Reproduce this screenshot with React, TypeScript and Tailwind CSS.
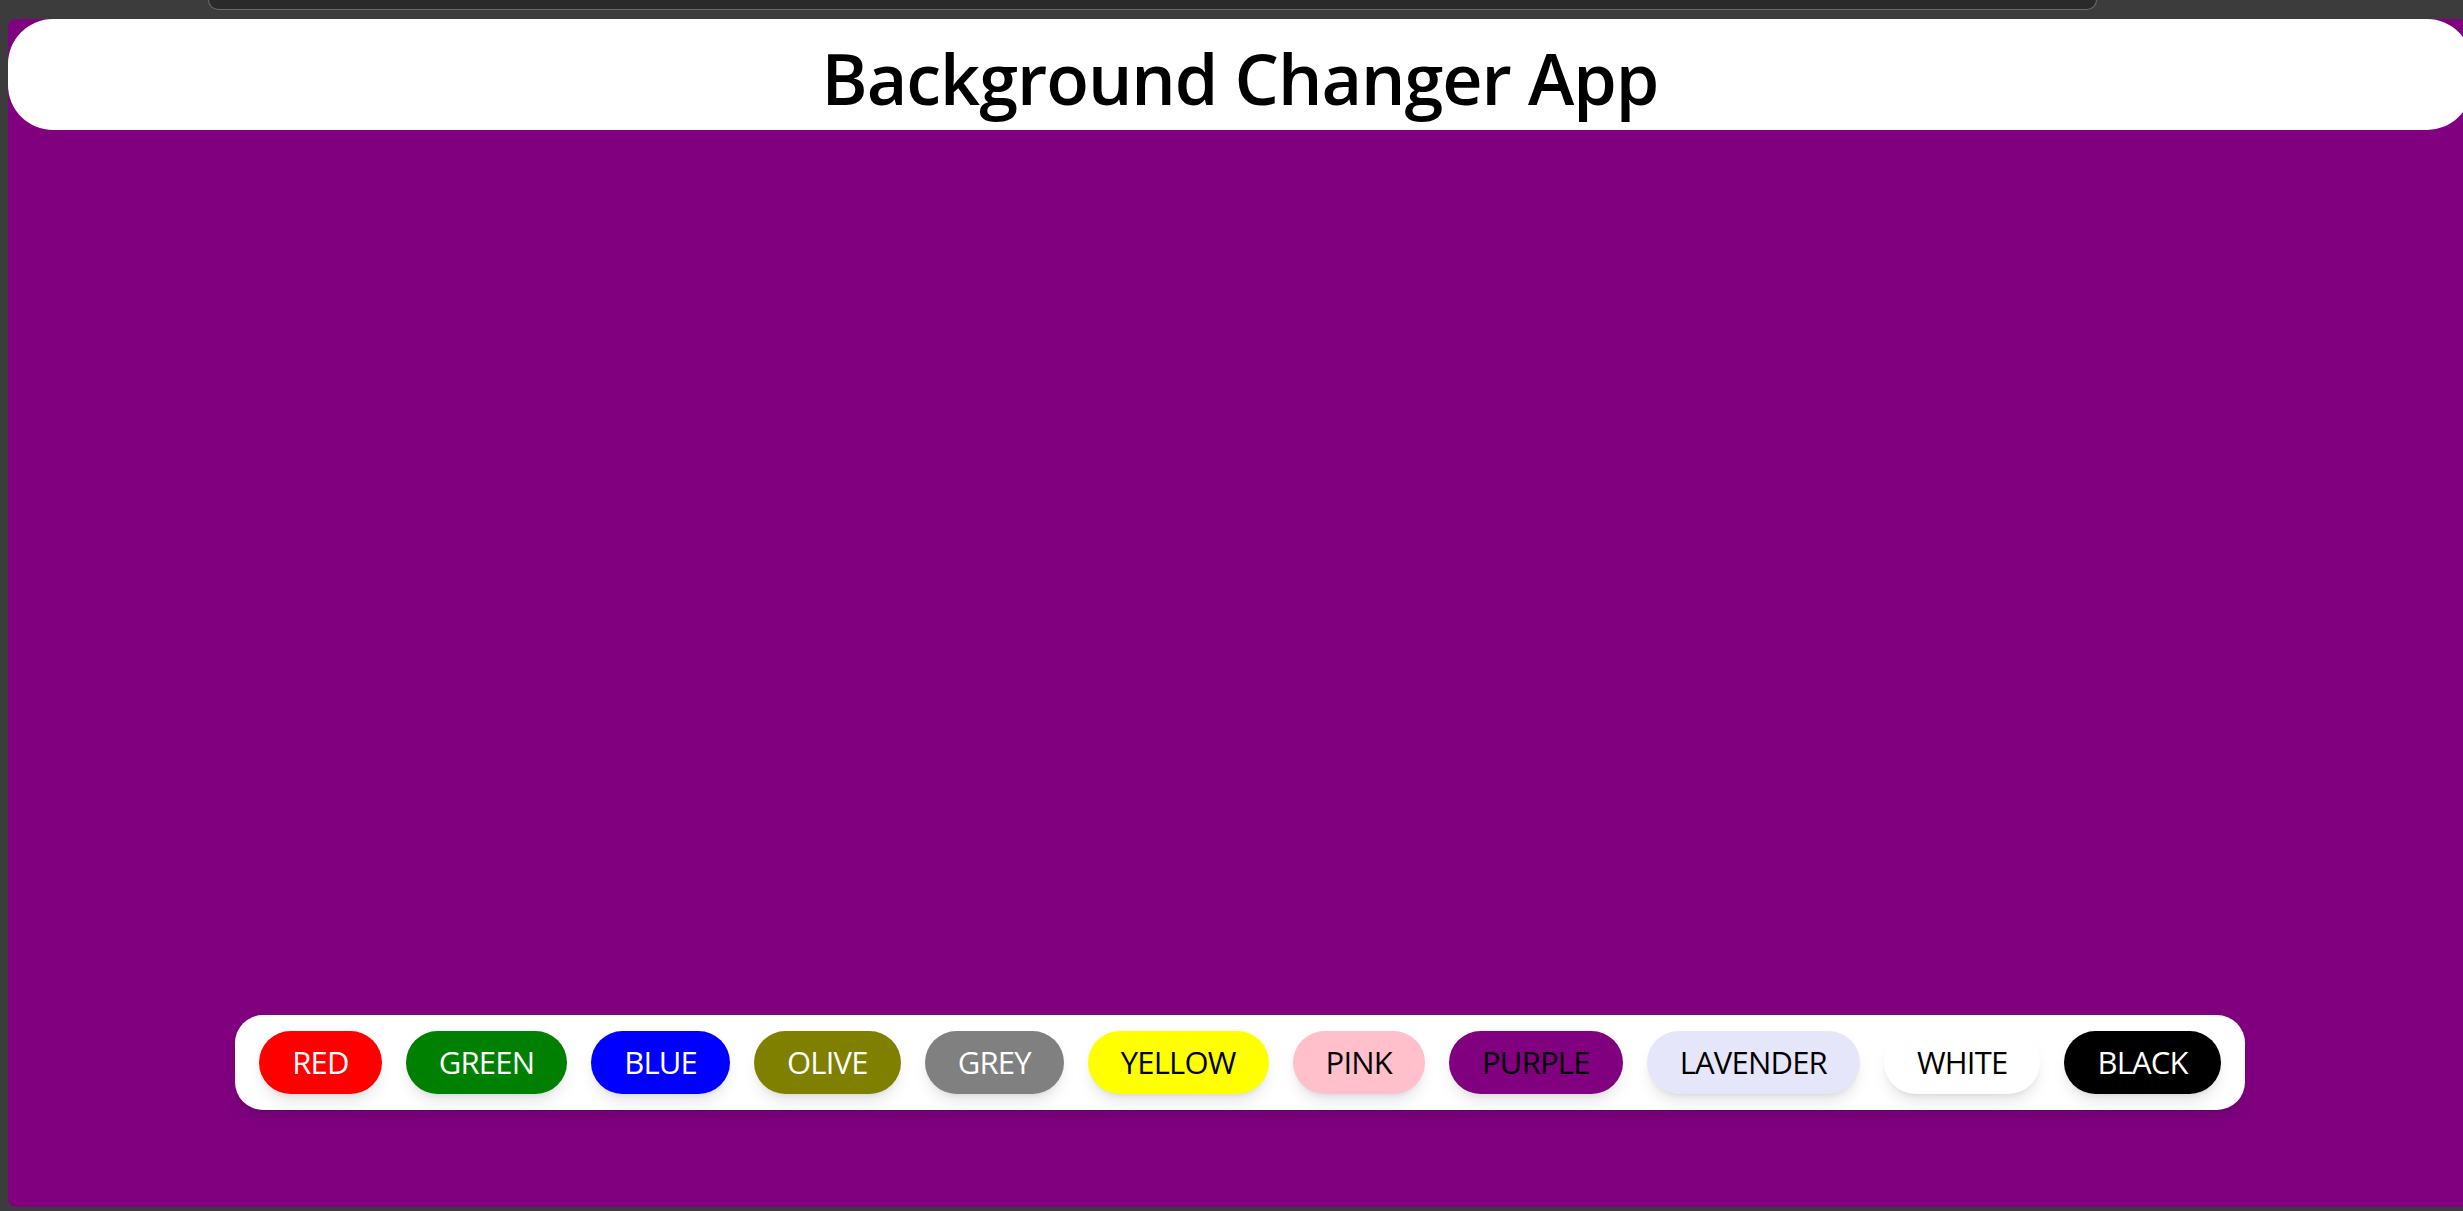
import React from "react";

const colors: { name: string; bg: string; text: string }[] = [
  { name: "RED", bg: "bg-[#ff0000]", text: "text-white" },
  { name: "GREEN", bg: "bg-[#008000]", text: "text-white" },
  { name: "BLUE", bg: "bg-[#0000ff]", text: "text-white" },
  { name: "OLIVE", bg: "bg-[#808000]", text: "text-white" },
  { name: "GREY", bg: "bg-[#808080]", text: "text-white" },
  { name: "YELLOW", bg: "bg-[#ffff00]", text: "text-black" },
  { name: "PINK", bg: "bg-[#ffc0cb]", text: "text-black" },
  { name: "PURPLE", bg: "bg-[#800080]", text: "text-black" },
  { name: "LAVENDER", bg: "bg-[#e6e6fa]", text: "text-black" },
  { name: "WHITE", bg: "bg-white", text: "text-black" },
  { name: "BLACK", bg: "bg-black", text: "text-white" },
];

export default function App() {
  return (
    <div
      className="w-[2463px] h-[1211px] bg-[#3c3c3c] overflow-hidden flex flex-col"
      style={{ fontFamily: '"Open Sans", "Noto Sans", sans-serif' }}
    >
      <div className="h-[19px] shrink-0 pl-[208px] flex items-start">
        <div className="w-[1889px] h-[10px] bg-[#2a2a2a] border border-t-0 border-[#6b6b6b] rounded-b-[10px]" />
      </div>
      <div className="h-[1188px] shrink-0 pl-[8px] flex">
        <div className="w-[2464px] shrink-0 h-full bg-[#800080] rounded-[8px] flex flex-col">
          <div className="h-[111px] shrink-0 bg-white rounded-[45px] flex items-center justify-center">
            <h1 className="text-[70px] font-semibold text-black leading-none tracking-[-1px] pt-[6px]">
              Background Changer App
            </h1>
          </div>
          <div className="flex-1" />
          <div className="flex justify-center pb-[97px]">
            <div className="bg-white rounded-[28px] shadow-lg px-[24px] py-[16px] flex gap-[24px]">
              {colors.map((c) => (
                <button
                  key={c.name}
                  className={`h-[63px] px-[33px] rounded-full shadow-lg flex items-center justify-center text-[31px] leading-none tracking-[-0.8px] ${c.bg} ${c.text}`}
                >
                  {c.name}
                </button>
              ))}
            </div>
          </div>
        </div>
      </div>
    </div>
  );
}
